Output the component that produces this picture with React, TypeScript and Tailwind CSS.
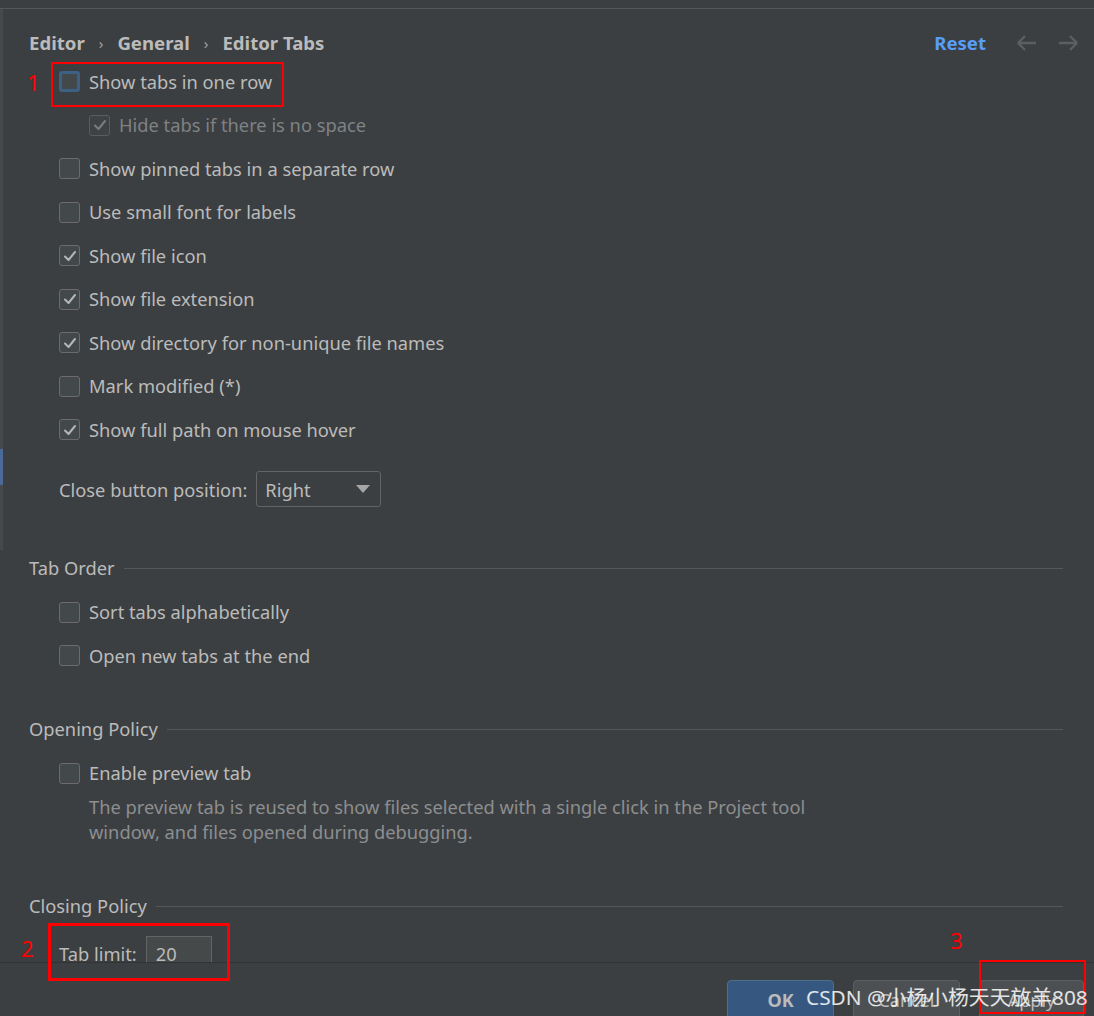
import React from 'react';

const font = { fontFamily: '"Noto Sans", "Open Sans", "Noto Sans CJK SC", sans-serif' };

const Check = ({ checked, focused, disabled }: { checked?: boolean; focused?: boolean; disabled?: boolean }) => (
  <span
    className={
      'w-[21px] h-[21px] rounded-[3px] flex items-center justify-center shrink-0 ' +
      (focused
        ? 'border-[3px] border-[#3d6185] bg-[#43494a]'
        : disabled
        ? 'border border-[#5a5d5f] bg-[#3e4244]'
        : 'border border-[#6b6b6b] bg-[#43494a]')
    }
  >
    {checked && (
      <svg width="14" height="12" viewBox="0 0 14 12">
        <path
          d="M2 6.5 L5.5 10 L12 2"
          fill="none"
          stroke={disabled ? '#7a7d7f' : '#b5b5b5'}
          strokeWidth="2"
          strokeLinecap="round"
          strokeLinejoin="round"
        />
      </svg>
    )}
  </span>
);

const Row = ({
  label,
  checked,
  focused,
  disabled,
  indent,
}: {
  label: string;
  checked?: boolean;
  focused?: boolean;
  disabled?: boolean;
  indent?: boolean;
}) => (
  <div className={'h-[43.5px] flex items-center gap-[9px] ' + (indent ? 'pl-[60px]' : 'pl-[30px]')}>
    <Check checked={checked} focused={focused} disabled={disabled} />
    <span className={'text-[18.3px] ' + (disabled ? 'text-[#7f8284]' : 'text-[#bbbbbb]')}>{label}</span>
  </div>
);

const Section = ({ title, className }: { title: string; className: string }) => (
  <div className={'h-[24px] flex items-center gap-[9px] ' + className}>
    <span className="text-[18.3px] text-[#bbbbbb] whitespace-nowrap">{title}</span>
    <div className="flex-1 h-px bg-[#545658] mt-[2px]" />
  </div>
);

const Arrow = ({ dir }: { dir: 'l' | 'r' }) => (
  <svg width="22" height="18" viewBox="0 0 22 18" className={dir === 'r' ? 'rotate-180' : ''}>
    <path d="M2 9 H20 M2 9 L9 2 M2 9 L9 16" fill="none" stroke="#5c5f61" strokeWidth="2.4" />
  </svg>
);

export default function App() {
  return (
    <div className="w-[1094px] h-[1016px] bg-[#3c3f41] relative overflow-hidden flex flex-col" style={font}>
      <div className="h-[9px] border-b border-[#545658] shrink-0" />
      <div className="h-[953px] flex overflow-hidden shrink-0">
        <div className="w-[3px] shrink-0 flex flex-col">
          <div className="h-[440px] bg-[#46494c]" />
          <div className="h-[36px] bg-[#4b6a9a]" />
          <div className="h-[65px] bg-[#46494c]" />
        </div>
        <div className="flex-1 pl-[26px] pr-[31px] flex flex-col">
          <div className="mt-[20px] h-[30px] flex items-center -mr-[16px]">
            <div className="flex items-center text-[18.6px] font-bold text-[#bbbbbb]">
              <span>Editor</span>
              <span className="mx-[14px] font-normal text-[15px] text-[#a0a0a0]">›</span>
              <span>General</span>
              <span className="mx-[14px] font-normal text-[15px] text-[#a0a0a0]">›</span>
              <span>Editor Tabs</span>
            </div>
            <div className="ml-auto flex items-center">
              <span className="text-[18.6px] font-bold text-[#589df6] mr-[30px]">Reset</span>
              <Arrow dir="l" />
              <span className="w-[19px]" />
              <Arrow dir="r" />
            </div>
          </div>
          <div className="mt-[3px]">
            <Row label="Show tabs in one row" focused />
            <Row label="Hide tabs if there is no space" checked disabled indent />
            <Row label="Show pinned tabs in a separate row" />
            <Row label="Use small font for labels" />
            <Row label="Show file icon" checked />
            <Row label="Show file extension" checked />
            <Row label="Show directory for non-unique file names" checked />
            <Row label="Mark modified (*)" />
            <Row label="Show full path on mouse hover" checked />
          </div>
          <div className="mt-[20px] h-[36px] pl-[30px] flex items-center gap-[9px]">
            <span className="text-[18.3px] text-[#bbbbbb]">Close button position:</span>
            <div className="w-[125px] h-[36px] border border-[#646464] rounded-[3px] flex items-center pl-[8px] pr-[10px]">
              <span className="text-[18.3px] text-[#bbbbbb]">Right</span>
              <svg className="ml-auto" width="14" height="8" viewBox="0 0 14 8">
                <path d="M0 0 H14 L7 8 Z" fill="#a6a6a6" />
              </svg>
            </div>
          </div>
          <Section title="Tab Order" className="mt-[48px]" />
          <div className="mt-[11px]">
            <Row label="Sort tabs alphabetically" />
            <Row label="Open new tabs at the end" />
          </div>
          <Section title="Opening Policy" className="mt-[39px]" />
          <div className="mt-[11px]">
            <Row label="Enable preview tab" />
          </div>
          <div className="pl-[60px] text-[18.3px] leading-[25px] text-[#8c8e90] -mt-[1px]">
            <div>The preview tab is reused to show files selected with a single click in the Project tool</div>
            <div>window, and files opened during debugging.</div>
          </div>
          <Section title="Closing Policy" className="mt-[50px]" />
          <div className="mt-[18px] pl-[30px] flex items-center gap-[9px] h-[32px]">
            <span className="text-[18.3px] text-[#bbbbbb] pt-[3px]">Tab limit:</span>
            <div className="w-[66px] h-[32px] bg-[#45494a] border border-[#646464] flex items-center pl-[9px] pt-[3px]">
              <span className="text-[18.3px] text-[#bbbbbb]">20</span>
            </div>
          </div>
        </div>
      </div>
      <div className="flex-1 border-t border-[#313335] flex justify-end gap-[19px] pr-[10px] pt-[17px]">
        <div className="w-[107px] h-[40px] rounded-[4px] bg-[#365880] border border-[#4c708c] flex justify-center pt-[6px]">
          <span className="text-[18px] font-bold text-[#bbbbbb]">OK</span>
        </div>
        <div className="w-[107px] h-[40px] rounded-[4px] bg-[#4c5052] border border-[#5e6060] flex justify-center pt-[6px]">
          <span className="text-[18px] text-[#bbbbbb]">Cancel</span>
        </div>
        <div className="w-[105px] h-[40px] rounded-[4px] bg-[#4c5052] border border-[#5e6060] flex justify-center pt-[6px]">
          <span className="text-[18px] text-[#bbbbbb]">Apply</span>
        </div>
      </div>

      {/* annotations */}
      <div className="absolute left-[51px] top-[62px] w-[233px] h-[45px] border-2 border-[#ff0000]" />
      <div className="absolute left-[27px] top-[68px] text-[22px] text-[#ff0000] leading-[28px]">1</div>
      <div className="absolute left-[48px] top-[923px] w-[182px] h-[58px] border-[3px] border-[#ff0000]" />
      <div className="absolute left-[21px] top-[934px] text-[22px] text-[#ff0000] leading-[28px]">2</div>
      <div className="absolute left-[979px] top-[960px] w-[107px] h-[54px] border-2 border-[#ff0000]" />
      <div className="absolute left-[950px] top-[926px] text-[22px] text-[#ff0000] leading-[28px]">3</div>
      <div className="absolute left-[806px] top-[983px] text-[20.8px] leading-[28px] text-white/85 whitespace-nowrap">
        CSDN @小杨小杨天天放羊808
      </div>
    </div>
  );
}
